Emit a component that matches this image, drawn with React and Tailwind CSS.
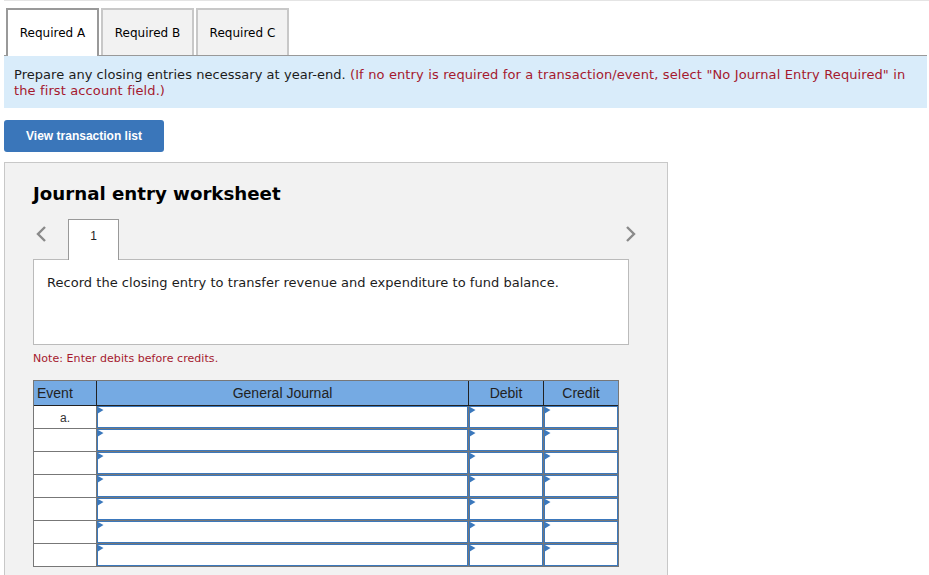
function Marker() {
  return (
    <svg className="absolute -left-px -top-px" width="7" height="9" viewBox="0 0 7 9" aria-hidden="true">
      <path d="M0 0.5 L6.5 4 L0 8 Z" fill="#3b78bc" />
    </svg>
  );
}

function InputCell({ width, sep }) {
  return (
    <div className={`${width} h-full ${sep ? "border-r border-[#777777]" : ""}`}>
      <div className="relative h-full border border-[#3b78bc] bg-white">
        <Marker />
      </div>
    </div>
  );
}

function Row({ label }) {
  return (
    <div className="flex h-[23px] border-b border-[#777777]">
      <div className="w-[63px] bg-white border-r border-[#777777] flex justify-center pt-1 text-[12px] leading-[16px] text-[#333333]">
        {label}
      </div>
      <InputCell width="w-[372px]" sep />
      <InputCell width="w-[75px]" sep />
      <InputCell width="w-[74px]" />
    </div>
  );
}

function Tab({ children, active }) {
  return (
    <div
      className={`w-[93px] border-2 border-b-0 flex items-center justify-center text-[12px] tracking-[0.02px] text-black ${
        active ? "bg-white border-[#999999] relative h-[48px]" : "bg-[#f2f2f2] border-[#c8c8c8] h-[47px]"
      }`}
    >
      {children}
    </div>
  );
}

export default function App() {
  const rows = ["a.", "", "", "", "", "", ""];
  return (
    <div className="h-[575px] w-[929px] overflow-hidden bg-white font-['DejaVu_Sans','Liberation_Sans',sans-serif]">
      <div className="ml-1 h-px bg-[#e4e4e4]" />
      <div className="ml-1 pl-[2px] pt-[7px] flex gap-[2px] h-[54px]">
        <Tab active>Required A</Tab>
        <Tab>Required B</Tab>
        <Tab>Required C</Tab>
      </div>
      <div className="ml-1 w-[923px] border-t border-[#999999] bg-[#d9ecfa] h-[53px] px-[10px] pt-[11px] text-[13px] leading-[16px] tracking-[0.04px] text-[#1c1c1c]">
        Prepare any closing entries necessary at year-end.{" "}
        <span className="text-[#a5192e] tracking-[0.09px] [word-spacing:0.2px]">
          (If no entry is required for a transaction/event, select "No Journal Entry Required" in the first account field.)
        </span>
      </div>
      <button className="ml-1 mt-3 block w-[160px] h-8 rounded-[3px] bg-[#3a76ba] text-white text-[12px] font-bold font-['Liberation_Sans',sans-serif]">
        View transaction list
      </button>
      <div className="ml-1 mt-[10px] w-[664px] h-[500px] border border-[#c8c8c8] bg-[#f2f2f2] pl-[28px]">
        <h2 className="mt-[19px] text-[18.2px] leading-[24px] font-bold text-black">Journal entry worksheet</h2>
        <div className="relative mt-[13px] w-[596px] h-[40px]">
          <svg className="absolute left-[2px] top-[7px]" width="12" height="16" viewBox="0 0 12 16" fill="none" stroke="#8a8a8a" strokeWidth="2.4" aria-hidden="true">
            <path d="M10 1 L3 8 L10 15" />
          </svg>
          <div className="absolute left-[35px] top-0 z-10 w-[51px] h-[41px] border border-b-0 border-[#999999] bg-white flex items-start justify-center pt-[8px] text-[12px] leading-[16px] text-[#222222] font-['Liberation_Sans',sans-serif]">
            1
          </div>
          <svg className="absolute left-[592px] top-[7px]" width="12" height="16" viewBox="0 0 12 16" fill="none" stroke="#8a8a8a" strokeWidth="2.4" aria-hidden="true">
            <path d="M2 1 L9 8 L2 15" />
          </svg>
        </div>
        <div className="w-[596px] h-[86px] border border-[#bbbbbb] bg-white px-[13px] pt-[15px] text-[13px] leading-[16px] tracking-[0.03px] text-[#1c1c1c]">
          Record the closing entry to transfer revenue and expenditure to fund balance.
        </div>
        <p className="mt-[6px] text-[11px] leading-[16px] tracking-[0.06px] text-[#a5192e]">Note: Enter debits before credits.</p>
        <div className="mt-[13px] w-[586px] border border-[#777777] border-b-0 font-['Liberation_Sans',sans-serif]">
          <div className="flex h-[25px] bg-[#75aae3] text-[14px] leading-[24px] text-[#222222] border-b border-[#222222]">
            <div className="w-[63px] pl-[3px] border-r border-[#222222]">Event</div>
            <div className="w-[372px] text-center border-r border-[#222222]">General Journal</div>
            <div className="w-[75px] text-center border-r border-[#222222]">Debit</div>
            <div className="w-[74px] text-center">Credit</div>
          </div>
          {rows.map((r, i) => (
            <Row key={i} label={r} />
          ))}
        </div>
      </div>
    </div>
  );
}
